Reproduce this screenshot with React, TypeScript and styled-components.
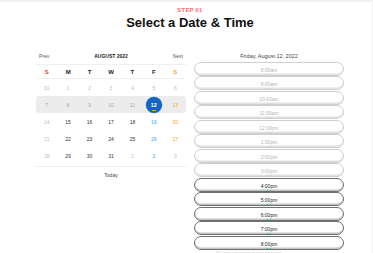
import styled, { createGlobalStyle } from "styled-components";

const GlobalStyle = createGlobalStyle`
  html, body {
    margin: 0;
    padding: 0;
    background: #f1f1f1;
    overflow: hidden;
    font-family: "Liberation Sans", Arial, sans-serif;
  }
`;

// ================================================
//              Components
// ================================================
const Page = styled.div`
  width: 372px;
  height: 251px;
  margin-top: 2px;
  background: #fff;
  overflow: hidden;
`;
const Header = styled.div`
  height: 48px;
  padding-left: 8px;
  padding-top: 5px;
  box-sizing: border-box;
  text-align: center;
`;
const Step = styled.div`
  font-size: 6px;
  line-height: 7px;
  font-weight: 700;
  color: #ff6b6b;
  letter-spacing: 0.2px;
`;
const Title = styled.h1`
  margin: 1px 0 0;
  font-size: 13px;
  line-height: 16px;
  font-weight: 700;
  color: #111;
`;
const Content = styled.div`
  display: grid;
  grid-template-columns: 150px 150px;
  column-gap: 8px;
  margin-left: 36px;
  align-items: start;
`;
const Calendar = styled.div`
  display: flex;
  flex-direction: column;
`;
const Nav = styled.div`
  height: 15px;
  padding: 0 3px 3px;
  box-sizing: border-box;
  display: flex;
  align-items: center;
  justify-content: space-between;
  border-bottom: 1px solid #f0f0f0;
  font-size: 5px;
  color: #555;
`;
const NavLabel = styled.div`
  font-weight: 700;
  color: #222;
  font-size: 5px;
`;
const Week = styled.div<{ head?: boolean; active?: boolean }>`
  display: grid;
  grid-template-columns: repeat(7, 1fr);
  align-items: center;
  height: ${(p) => (p.head ? "13px" : "17px")};
  border-bottom: ${(p) => (p.head ? "1px solid #f0f0f0" : "none")};
  background: ${(p) => (p.active ? "#ececec" : "transparent")};
  border-radius: 3px;
`;
const DayHead = styled.div<{ color: string }>`
  text-align: center;
  font-size: 6px;
  font-weight: 700;
  color: ${(p) => p.color};
`;
const Day = styled.div<{ color: string }>`
  text-align: center;
  font-size: 5px;
  color: ${(p) => p.color};
`;
const Selected = styled.div`
  justify-self: center;
  position: relative;
  width: 16px;
  height: 16px;
  border-radius: 50%;
  background: #1565c0;
  box-shadow: 0 0 0 0.5px #9fc1ea;
  color: #fff;
  font-size: 5.5px;
  font-weight: 700;
  display: flex;
  align-items: center;
  justify-content: center;
  &::after {
    content: "";
    position: absolute;
    left: 6px;
    bottom: 2px;
    width: 4px;
    height: 1px;
    background: #f5a623;
  }
`;
const CalFoot = styled.div`
  margin-top: 2px;
  border-top: 1px solid #f0f0f0;
  height: 15px;
  display: flex;
  align-items: center;
  justify-content: center;
  font-size: 5px;
  color: #444;
`;
const Slots = styled.div`
  display: flex;
  flex-direction: column;
  gap: 0.5px;
`;
const DateLabel = styled.div`
  height: 11px;
  display: flex;
  align-items: center;
  justify-content: center;
  font-size: 5.5px;
  color: #444;
`;
const Slot = styled.button<{ open: boolean }>`
  height: 14px;
  width: 100%;
  padding: 4px 0 0;
  box-sizing: border-box;
  border: 1px solid ${(p) => (p.open ? "#6f6f6f" : "#cfcfcf")};
  border-radius: 8px;
  background: #fff;
  box-shadow: inset 0 -1.5px 0 ${(p) => (p.open ? "#c4c4c4" : "#e2e2e2")};
  display: flex;
  flex-direction: column;
  align-items: center;
  font-family: inherit;
  font-size: 5px;
  line-height: 6px;
  color: ${(p) => (p.open ? "#222" : "#b3b3b3")};
`;
const Dots = styled.span<{ open: boolean }>`
  display: flex;
  gap: 2.5px;
  margin-top: 1px;
  & > i {
    width: 1.2px;
    height: 1.2px;
    background: ${(p) => (p.open ? "#27c463" : "#c8c8c8")};
  }
`;
const Note = styled.div`
  margin: 0.5px 0 0 22px;
  font-size: 4px;
  line-height: 4px;
  color: #cfcfcf;
`;

// ================================================
//                Data
// ================================================
const LIGHT = "#bdbdbd";
const MID = "#a8a8a8";
const DARK = "#333";
const ORANGE = "#f5a623";
const BLUE = "#42a5f5";

const heads = [
  { t: "S", c: "#e53935" },
  { t: "M", c: "#222" },
  { t: "T", c: "#222" },
  { t: "W", c: "#222" },
  { t: "T", c: "#222" },
  { t: "F", c: "#222" },
  { t: "S", c: ORANGE },
];

type Cell = { n: number; c: string; sel?: boolean };

const weeks: Cell[][] = [
  [31, 1, 2, 3, 4, 5, 6].map((n) => ({ n, c: LIGHT })),
  [
    { n: 7, c: MID },
    { n: 8, c: MID },
    { n: 9, c: MID },
    { n: 10, c: MID },
    { n: 11, c: MID },
    { n: 12, c: "#fff", sel: true },
    { n: 13, c: ORANGE },
  ],
  [
    { n: 14, c: LIGHT },
    { n: 15, c: DARK },
    { n: 16, c: DARK },
    { n: 17, c: DARK },
    { n: 18, c: DARK },
    { n: 19, c: BLUE },
    { n: 20, c: ORANGE },
  ],
  [
    { n: 21, c: LIGHT },
    { n: 22, c: DARK },
    { n: 23, c: DARK },
    { n: 24, c: DARK },
    { n: 25, c: DARK },
    { n: 26, c: BLUE },
    { n: 27, c: ORANGE },
  ],
  [
    { n: 28, c: LIGHT },
    { n: 29, c: DARK },
    { n: 30, c: DARK },
    { n: 31, c: DARK },
    { n: 1, c: LIGHT },
    { n: 2, c: BLUE },
    { n: 3, c: LIGHT },
  ],
];

const times = [
  "8:00am",
  "9:00am",
  "10:00am",
  "11:00am",
  "12:00pm",
  "1:00pm",
  "2:00pm",
  "3:00pm",
  "4:00pm",
  "5:00pm",
  "6:00pm",
  "7:00pm",
  "8:00pm",
];

// ================================================
//                App
// ================================================
const App = () => {
  return (
    <>
      <GlobalStyle />
      <Page>
        <Header>
          <Step>STEP 01</Step>
          <Title>Select a Date &amp; Time</Title>
        </Header>
        <Content>
          <Calendar>
            <Nav>
              <span>Prev</span>
              <NavLabel>AUGUST 2022</NavLabel>
              <span>Next</span>
            </Nav>
            <Week head>
              {heads.map((h, i) => (
                <DayHead key={i} color={h.c}>
                  {h.t}
                </DayHead>
              ))}
            </Week>
            {weeks.map((w, i) => (
              <Week key={i} active={i === 1}>
                {w.map((d, j) =>
                  d.sel ? (
                    <Selected key={j}>{d.n}</Selected>
                  ) : (
                    <Day key={j} color={d.c}>
                      {d.n}
                    </Day>
                  )
                )}
              </Week>
            ))}
            <CalFoot>Today</CalFoot>
          </Calendar>
          <Slots>
            <DateLabel>Friday, August 12, 2022</DateLabel>
            {times.map((t, i) => {
              const open = i >= 8;
              return (
                <Slot key={t} open={open}>
                  {t}
                  <Dots open={open}>
                    <i />
                    <i />
                  </Dots>
                </Slot>
              );
            })}
            <Note>All times are shown in your time zone</Note>
          </Slots>
        </Content>
      </Page>
    </>
  );
};

export default App;
